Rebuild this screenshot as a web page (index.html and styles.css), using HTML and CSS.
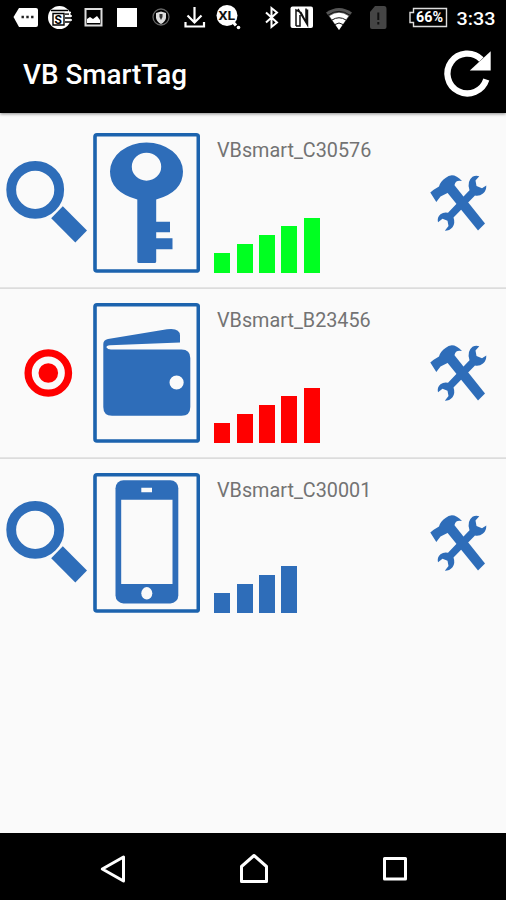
FILE: index.html
```html
<!DOCTYPE html>
<html lang="en">
<head>
<meta charset="utf-8">
<title>VB SmartTag</title>
<link rel="stylesheet" href="styles.css">
</head>
<body>
<svg class="defs" width="0" height="0" aria-hidden="true">
  <symbol id="search" viewBox="0 0 93 170">
    <circle cx="35.2" cy="71.8" r="24" fill="none" stroke="currentColor" stroke-width="9.8"/>
    <path d="M62.800 88.300L87 112.600L75.300 124.600L51.200 100.200Z" fill="currentColor"/>
  </symbol>
  <symbol id="tools" viewBox="420 47 86 80">
    <g fill="currentColor">
      <path d="M430.300 74.500L433.300 72L439 68.500Q440.500 63 445.500 60Q453 53.500 462 63Q455.500 61.500 454.500 67L448.500 74.500L440.500 78.500L436.300 84Z"/>
      <path d="M453.500 66L485 105.500L478 112.500L446 73Z"/>
      <path d="M472.500 58.800Q475.500 57.300 479.300 58.200L475.500 62.500L476.500 68L482 70.300L486.300 67.500Q486.500 72.500 483 75.500Q479.500 78.300 475 77.500L453.500 99.500Q455.500 105 452.500 109.300Q449.500 112.800 444.800 112.800L448.500 108L447.500 102.800L442.500 100.800L438 104.300Q436.800 99.500 440.500 96.300Q443.800 93.800 448 94.800L469.500 72.300Q466.500 63.500 472.500 58.800Z"/>
    </g>
  </symbol>
</svg>
<header class="status">
  <svg width="40" height="36" viewBox="0 0 40 36"><path d="M13.500 17L19 8H36Q38 8 38 10V25Q38 27 36 27H19Z" fill="#fff"/><path d="M21.500 17h2.400m2.400 0h2.400m2.400 0h2.400" stroke="#222" stroke-width="2.400"/></svg>
  <svg width="36" height="36" viewBox="40 0 36 36"><circle cx="59.500" cy="17.500" r="11.500" fill="#fff"/><path d="M51 10.500h17M53 13.500h11v11.500H53zM65 14h4M65 18h6M65 22h5" fill="none" stroke="#000" stroke-width="1.400"/><text x="54.500" y="23.500" class="stamp">S</text><path d="M65 12.500h6M65 16h7M65 20h7" stroke="#fff" stroke-width="1.500"/></svg>
  <svg width="34" height="36" viewBox="76 0 34 36"><rect x="85.500" y="9" width="16" height="16.500" fill="none" stroke="#ddd" stroke-width="2"/><path d="M87 23v-4l3-2 3 2 4-3 3 4v3z" fill="#fff"/></svg>
  <svg width="34" height="36" viewBox="110 0 34 36"><rect x="117" y="8" width="20" height="19" fill="#fff"/></svg>
  <svg width="34" height="36" viewBox="144 0 34 36"><circle cx="161" cy="17" r="8" fill="none" stroke="#666" stroke-width="1.300"/><path d="M161 11.500L166 13V18Q165 22 161 24Q157 22 156 18V13Z" fill="#ddd"/><path d="M159.500 14h3v3l-1.500 3-1.500-3z" fill="#333"/></svg>
  <svg width="34" height="36" viewBox="178 0 34 36"><path d="M194.500 7V22M187.500 15.500L194.500 22.500L201.500 15.500M185.500 22V26.500H204V22" fill="none" stroke="#fff" stroke-width="2.200"/></svg>
  <svg width="42" height="36" viewBox="212 0 42 36"><circle cx="227" cy="15.500" r="10.500" fill="#fff"/><path d="M232 21L236 25.500" stroke="#fff" stroke-width="3"/><circle cx="238.500" cy="27.500" r="1.800" fill="#fff"/><text x="218.500" y="19.500" class="xl" textLength="16.500" lengthAdjust="spacingAndGlyphs">XL</text></svg>
  <svg width="34" height="36" viewBox="254 0 34 36"><path d="M266 12.500L277 22.500L271.500 27V8L277 12.500L266 22.500" fill="none" stroke="#fff" stroke-width="2"/></svg>
  <svg width="34" height="36" viewBox="288 0 34 36"><rect x="290.500" y="6.500" width="22.500" height="21.500" rx="2" fill="#fff"/><path d="M296 26V10L301 12.500L306 22V8.500M298 9L307.500 25V9.500M296 26H300V15" fill="none" stroke="#111" stroke-width="1.500"/></svg>
  <svg width="40" height="36" viewBox="322 0 40 36"><path d="M326 12.500Q339 3.500 352 12.500L339 30Z" fill="#555"/><path d="M329.500 16Q339 9.500 348.500 16L339 30Z" fill="#fff"/><path d="M328 15.200Q339 7.500 350 15.200M332 20Q339 15.500 346 20M335 24.500Q339 21.500 343 24.500" fill="none" stroke="#111" stroke-width="1"/></svg>
  <svg width="38" height="36" viewBox="362 0 38 36"><path d="M375 6H384Q386.500 6 386.500 9V27Q386.500 29 384.500 29H372Q370 29 370 27V12Z" fill="#454545"/><path d="M378.300 12.500V20M378.300 22V24.500" stroke="#111" stroke-width="2"/></svg>
  <svg width="54" height="36" viewBox="400 0 54 36"><path d="M413.500 8.500H446.500V26.500H413.500V22.500H410V12.500H413.500Z" fill="none" stroke="#ddd" stroke-width="1.400"/><text x="416" y="22" class="percent" textLength="27" lengthAdjust="spacingAndGlyphs">66%</text></svg>
  <svg width="52" height="36" viewBox="454 0 52 36"><text x="456.500" y="25" class="clock" textLength="39" lengthAdjust="spacingAndGlyphs">3:33</text></svg>
</header>
<div class="appbar">
  <h1>VB SmartTag</h1>
  <svg width="64" height="77" viewBox="442 36 64 77"><path d="M486.300 79.500A19.900 19.900 0 1 1 481.400 59.400" fill="none" stroke="#fff" stroke-width="6.300"/><path d="M490.700 51.200V70.500H469.800Z" fill="#fff"/></svg>
</div>
<main>
  <section class="row">
    <svg class="finder" width="93" height="170"><use href="#search"/></svg>
    <svg class="thumb" width="107" height="140" viewBox="93 15 107 140">
      <rect class="frame" x="95" y="16.800" width="103.300" height="136.200" rx="2"/>
      <path fill-rule="evenodd" d="M110 53.500A36.500 29 0 0 1 183 53.500Q183 74 156.200 81.500V103.700H170V114.300H156.200V120.300H172.500V131.300H156.200V143.500Q156.200 145 154.500 145H139Q137.300 145 137.300 143.500V81.500Q110 74 110 53.500ZM131.800 48.700A14.700 14 0 0 0 161.200 48.700A14.700 14 0 0 0 131.800 48.700Z"/>
    </svg>
    <div class="info">
      <p>VBsmart_C30576</p>
      <div class="bars green"><i></i><i></i><i></i><i></i><i></i></div>
    </div>
    <svg class="tools" width="86" height="80"><use href="#tools"/></svg>
  </section>
  <section class="row">
    <svg class="finder" width="93" height="170" viewBox="0 0 93 170"><circle cx="48.300" cy="85" r="20.200" fill="none" stroke="red" stroke-width="7.300"/><circle cx="48.300" cy="85" r="9.800" fill="red"/></svg>
    <svg class="thumb" width="107" height="140" viewBox="93 15 107 140">
      <rect class="frame" x="95" y="16.800" width="103.300" height="136.200" rx="2"/>
      <path fill-rule="evenodd" d="M103.300 56Q103.300 52 108 51L167 41.200Q180 39.500 180 47.500V54.500L110 57.200Q106 57.500 106.500 59.500Q107.500 61.500 111 61.500H181.500Q190.300 61.500 190.300 70V119Q190.300 127.700 181.500 127.700H112Q103.300 127.700 103.300 119ZM169.500 94.500A7.100 7.100 0 0 0 183.700 94.500A7.100 7.100 0 0 0 169.500 94.500Z"/>
    </svg>
    <div class="info">
      <p>VBsmart_B23456</p>
      <div class="bars red"><i></i><i></i><i></i><i></i><i></i></div>
    </div>
    <svg class="tools" width="86" height="80"><use href="#tools"/></svg>
  </section>
  <section class="row">
    <svg class="finder" width="93" height="170"><use href="#search"/></svg>
    <svg class="thumb" width="107" height="140" viewBox="93 15 107 140">
      <rect class="frame" x="95" y="16.800" width="103.300" height="136.200" rx="2"/>
      <rect x="115.500" y="22.200" width="62.800" height="123.200" rx="8"/>
      <path d="M121.200 41.700H172.500V126H121.200ZM141.300 29.700H152V34.300H141.300Z" fill="#fafafa"/>
      <ellipse cx="146.800" cy="135.300" rx="5.500" ry="6.200" fill="#fafafa"/>
    </svg>
    <div class="info">
      <p>VBsmart_C30001</p>
      <div class="bars blue"><i></i><i></i><i></i><i></i></div>
    </div>
    <svg class="tools" width="86" height="80"><use href="#tools"/></svg>
  </section>
</main>
<nav>
  <svg width="30" height="67" viewBox="98 833 30 67"><path d="M102.300 869L123.500 857V881Z"/></svg>
  <svg width="32" height="67" viewBox="237.500 833 32 67"><path d="M241 881.500V866.500L253.500 855.500L266 866.500V881.500Z"/></svg>
  <svg width="30" height="67" viewBox="379.500 833 30 67"><rect x="384" y="858.500" width="21" height="20.500"/></svg>
</nav>
</body>
</html>
```
FILE: styles.css
```css
* { box-sizing: border-box; }

body {
  margin: 0;
  width: 506px;
  height: 900px;
  display: flex;
  flex-direction: column;
  overflow: hidden;
  background: #fafafa;
  font-family: Roboto, "Liberation Sans", sans-serif;
}

svg { display: block; flex: none; }

.defs { position: absolute; }

.status {
  display: flex;
  height: 36px;
  background: #000;
}

.status text { font-weight: 700; }
.stamp { font-size: 12px; fill: #000; }
.xl { font-size: 12px; fill: #111; }
.percent { font-size: 14px; fill: #fff; }
.status .clock { font-size: 19px; font-weight: 500; fill: #fff; }

.appbar {
  display: flex;
  align-items: center;
  justify-content: space-between;
  height: 77px;
  padding-left: 23px;
  background: #000;
  box-shadow: 0 1px 3px rgba(0, 0, 0, .45);
  position: relative;
}

h1 {
  margin: 0;
  color: #fff;
  font-size: 27.8px;
  font-weight: 500;
  line-height: 32px;
}

main {
  flex: 1;
  padding-top: 5px;
}

.row {
  display: flex;
  height: 170px;
  color: #2e6db9;
  border-bottom: 1px solid #e4e4e4;
  box-shadow: 0 1px 0 #dcdcdc;
}

.row:last-child { border-bottom: 0; box-shadow: none; }
.finder { margin-bottom: -1px; }

.thumb {
  margin-top: 15px;
  fill: #2e6db9;
}

.thumb .frame {
  fill: none;
  stroke: #1c63ae;
  stroke-width: 3.6;
}

.info {
  display: flex;
  flex: 1;
  flex-direction: column;
  justify-content: space-between;
  height: 155px;
  padding: 21px 0 0 14.4px;
}

.info p {
  margin: 0 0 0 2.6px;
  color: #737373;
  font-size: 19.8px;
  line-height: 24px;
}

.tools { margin-top: 47px; }

.bars {
  display: flex;
  align-items: flex-end;
  gap: 6.3px;
}

.bars i { width: 16px; height: 20px; background: currentColor; }
.bars i:nth-child(2) { height: 29px; }
.bars i:nth-child(3) { height: 38px; }
.bars i:nth-child(4) { height: 46.6px; }
.bars i:nth-child(5) { height: 55.4px; }

.green { color: #00ff21; }
.red { color: #f00; }
.blue { color: #2e6db9; }

nav {
  display: flex;
  justify-content: space-between;
  height: 67px;
  padding: 0 96.5px 0 98px;
  background: #000;
}

nav svg {
  fill: none;
  stroke: #fff;
  stroke-width: 3;
  stroke-linejoin: round;
}
```
